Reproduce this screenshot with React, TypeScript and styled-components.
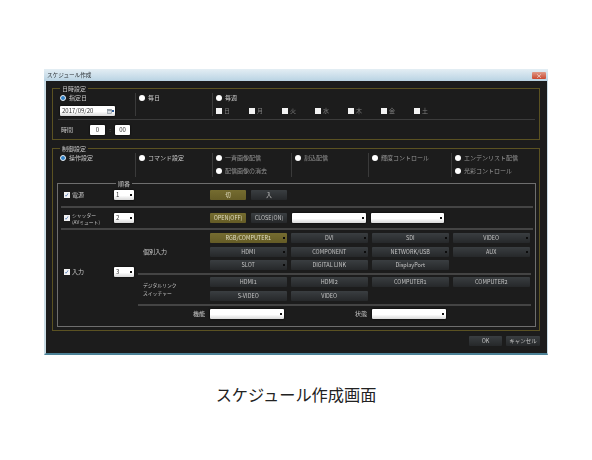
import React from "react";
import styled, { createGlobalStyle } from "styled-components";

const Global = createGlobalStyle`
  html, body { margin: 0; padding: 0; background: #fff; }
  body { font-family: "Noto Sans CJK JP", "Liberation Sans", sans-serif; }
`;

const Page = styled.div`
  width: 592px;
  height: 460px;
  overflow: hidden;
  padding-top: 69px;
  box-sizing: border-box;
`;
const Win = styled.div`
  width: 504px;
  height: 286px;
  margin-left: 44px;
  box-sizing: border-box;
  background: #1c1c1c;
  border-left: 2px solid #c9dbe4;
  border-right: 1px solid #c9dbe4;
  border-bottom: 2px solid #4b8196;
  filter: blur(0.45px);
  display: flex;
  flex-direction: column;
  font-size: 6px;
  line-height: 8px;
  color: #c8c8c8;
`;
const TitleBar = styled.div`
  height: 12px;
  margin: 0 -1px 0 -2px;
  padding: 0 2px 0 3px;
  flex: none;
  display: flex;
  align-items: center;
  justify-content: space-between;
  background: linear-gradient(#e4eef4, #b9d3e3);
  color: #2a2f33;
  font-size: 5.6px;
`;
const CloseBtn = styled.div`
  width: 14px;
  height: 7px;
  border-radius: 1px;
  background: linear-gradient(#e09a88, #c9482f);
  color: #fff;
  font-size: 6px;
  line-height: 7px;
  text-align: center;
`;
const Body = styled.div`
  flex: 1;
  padding: 7px 7px 0 6px;
  display: flex;
  flex-direction: column;
  gap: 8px;
`;
const Group = styled.section`
  position: relative;
  border: 1px solid #5b5222;
  box-sizing: border-box;
`;
const Legend = styled.div`
  position: absolute;
  left: 7px;
  top: -4px;
  padding: 0 2px;
  background: #1c1c1c;
`;
const Columns = styled.div<{ $cols: string; $height: number }>`
  display: grid;
  grid-template-columns: ${(p) => p.$cols};
  height: ${(p) => p.$height}px;
  margin-top: 4px;
`;
const Col = styled.div<{ $first?: boolean }>`
  display: flex;
  flex-direction: column;
  gap: 3px;
  padding-left: ${(p) => (p.$first ? 7 : 3)}px;
  border-left: ${(p) => (p.$first ? "none" : "1px solid #3a3a3a")};
`;
const Opt = styled.div<{ $dim?: boolean }>`
  height: 10px;
  display: flex;
  align-items: center;
  gap: 2px;
  white-space: nowrap;
  color: ${(p) => (p.$dim ? "#969696" : "#c8c8c8")};
`;
const Radio = styled.span<{ $on?: boolean }>`
  width: 6px;
  height: 6px;
  flex: none;
  border-radius: 50%;
  margin-right: 1px;
  box-sizing: border-box;
  background: ${(p) => (p.$on ? "#2f7fc4" : "#fff")};
  border: ${(p) => (p.$on ? "1.5px solid #e8eef2" : "none")};
`;
const Box = styled.span`
  width: 6px;
  height: 6px;
  flex: none;
  background: #f2f2f2;
  color: #2b5fa8;
  font-size: 6px;
  line-height: 6px;
  text-align: center;
  font-family: "DejaVu Sans", sans-serif;
`;
const Week = styled.div`
  display: grid;
  grid-template-columns: repeat(7, 33px);
`;
const DayCheck = styled.div`
  display: flex;
  align-items: center;
  gap: 2px;
  height: 10px;
  color: #808080;
`;
const Field = styled.div<{ $w: number }>`
  position: relative;
  width: ${(p) => p.$w}px;
  height: 10px;
  flex: none;
  box-sizing: border-box;
  padding: 0 2px;
  border-radius: 1px;
  background: linear-gradient(#fff 55%, #d8d8d8);
  box-shadow: 0 0 2px #000;
  color: #333;
  line-height: 10px;
  white-space: nowrap;
  &::after {
    content: "";
    position: absolute;
    right: 2px;
    top: 4px;
    width: 2px;
    height: 2px;
    background: #111;
  }
`;
const DateField = styled(Field)`
  display: flex;
  align-items: center;
  justify-content: space-between;
  padding-right: 3px;
  &::after { right: 1px; background: #2f5f9f; }
`;
const Sep = styled.div`
  height: 1px;
  margin: 3px 4px 0 5px;
  background: #3c3c3c;
`;
const TimeRow = styled.div`
  display: flex;
  align-items: center;
  height: 19px;
  padding-left: 8px;
`;
const TimeLabel = styled.span`
  width: 29px;
`;
const TimeInput = styled.div`
  width: 15px;
  height: 10px;
  background: #fff;
  color: #333;
  text-align: center;
  line-height: 10px;
  border-radius: 1px;
  box-shadow: 0 0 2px #000;
`;
const Colon = styled.span`
  width: 10px;
  text-align: center;
  color: #666;
`;
const Inner = styled.div`
  position: relative;
  margin: 6px 3px 3px 4px;
  border: 1px solid #6e6e6e;
  box-sizing: border-box;
  height: 144px;
`;
const InnerLegend = styled.div`
  position: absolute;
  left: 58px;
  top: -4px;
  padding: 0 2px;
  background: #1c1c1c;
`;
const Row = styled.div<{ $h: number }>`
  box-sizing: border-box;
  height: ${(p) => p.$h}px;
  margin: 0 2px 0 3px;
  padding-left: 3px;
  border-bottom: 2px solid #444;
  display: flex;
  align-items: center;
`;
const CheckCell = styled.div`
  width: 50px;
  flex: none;
  display: flex;
  align-items: center;
  gap: 2px;
  white-space: nowrap;
`;
const TwoLines = styled.span`
  display: block;
  font-size: 4.8px;
  line-height: 7.5px;
`;
const SelectCell = styled.div`
  width: 96px;
  flex: none;
`;
const Actions = styled.div`
  display: flex;
  gap: 5px;
`;
const Btn = styled.div<{ $on?: boolean; $caret?: boolean; $w?: number }>`
  position: relative;
  width: ${(p) => (p.$w ? `${p.$w}px` : "auto")};
  height: 10px;
  flex: none;
  line-height: 10px;
  text-align: center;
  font-size: 5.5px;
  white-space: nowrap;
  border-radius: 1px;
  background: ${(p) =>
    p.$on ? "linear-gradient(#756c30, #655c26)" : "linear-gradient(#3a3e41, #26282a)"};
  color: ${(p) => (p.$on ? "#e0dcc0" : "#c4c4c4")};
  &::after {
    content: "";
    display: ${(p) => (p.$caret ? "block" : "none")};
    position: absolute;
    right: 2px;
    top: 4px;
    width: 2px;
    height: 2px;
    background: #0c0c0c;
  }
`;
const InputArea = styled.div`
  display: flex;
  margin-left: 3px;
`;
const InputLeft = styled.div`
  width: 77px;
  height: 84px;
  padding-left: 3px;
  box-sizing: border-box;
  flex: none;
  display: flex;
  align-items: center;
`;
const InputRight = styled.div`
  width: 393px;
  display: flex;
  flex-direction: column;
`;
const Sec = styled.div<{ $top: number; $bottom: number; $line?: boolean }>`
  display: flex;
  align-items: center;
  padding: ${(p) => p.$top}px 0 ${(p) => p.$bottom}px;
  border-bottom: ${(p) => (p.$line ? "2px solid #444" : "none")};
`;
const SecLabel = styled.div`
  width: 72px;
  flex: none;
  padding-left: 5px;
  box-sizing: border-box;
  white-space: nowrap;
`;
const BtnGrid = styled.div`
  display: grid;
  grid-template-columns: repeat(4, 76.5px);
  column-gap: 4.5px;
  row-gap: 3.5px;
`;
const FieldLabel = styled.div<{ $w: number }>`
  width: ${(p) => p.$w}px;
  flex: none;
  box-sizing: border-box;
  padding-right: 5px;
  text-align: right;
`;
const Footer = styled.div`
  display: flex;
  justify-content: flex-end;
  gap: 4px;
  margin-top: -3px;
`;
const Caption = styled.div`
  margin-top: 29px;
  text-align: center;
  font-size: 16.2px;
  line-height: 20px;
  color: #222;
`;
const DAYS = ["日", "月", "火", "水", "木", "金", "土"];
const INPUTS: [string, boolean, boolean][] = [
  ["RGB/COMPUTER1", true, true],
  ["DVI", false, true],
  ["SDI", false, true],
  ["VIDEO", false, true],
  ["HDMI", false, true],
  ["COMPONENT", false, true],
  ["NETWORK/USB", false, true],
  ["AUX", false, true],
  ["SLOT", false, true],
  ["DIGITAL LINK", false, false],
  ["DisplayPort", false, false],
];
const LINKS = ["HDMI1", "HDMI2", "COMPUTER1", "COMPUTER2", "S-VIDEO", "VIDEO"];

const CalendarIcon = () => (
  <svg width="5" height="5" viewBox="0 0 5 5">
    <rect x="0.5" y="0.5" width="4" height="4" fill="#d8dde2" stroke="#7d8791" strokeWidth="0.6" />
    <rect x="0.5" y="0.5" width="4" height="1.2" fill="#7d8791" />
  </svg>
);

export default function App() {
  return (
    <Page>
      <Global />
      <Win>
        <TitleBar>
          <span>スケジュール作成</span>
          <CloseBtn>×</CloseBtn>
        </TitleBar>
        <Body>
          <Group>
            <Legend>日時設定</Legend>
            <Columns $cols="82px 77px 1fr" $height={23}>
              <Col $first>
                <Opt><Radio $on />指定日</Opt>
                <DateField $w={55}>
                  <span>2017/09/20</span>
                  <CalendarIcon />
                </DateField>
              </Col>
              <Col><Opt><Radio />毎日</Opt></Col>
              <Col>
                <Opt><Radio />毎週</Opt>
                <Week>
                  {DAYS.map((d) => (
                    <DayCheck key={d}><Box />{d}</DayCheck>
                  ))}
                </Week>
              </Col>
            </Columns>
            <Sep />
            <TimeRow>
              <TimeLabel>時間</TimeLabel>
              <TimeInput>0</TimeInput>
              <Colon>:</Colon>
              <TimeInput>00</TimeInput>
            </TimeRow>
          </Group>
          <Group>
            <Legend>制御設定</Legend>
            <Columns $cols="82px 77px 79px 77px 83px 1fr" $height={24}>
              <Col $first><Opt><Radio $on />操作設定</Opt></Col>
              <Col><Opt><Radio />コマンド設定</Opt></Col>
              <Col>
                <Opt $dim><Radio />一斉画像配信</Opt>
                <Opt $dim><Radio />配信画像の消去</Opt>
              </Col>
              <Col><Opt $dim><Radio />割込配信</Opt></Col>
              <Col><Opt $dim><Radio />輝度コントロール</Opt></Col>
              <Col>
                <Opt $dim><Radio />エンデンリスト配信</Opt>
                <Opt $dim><Radio />光彩コントロール</Opt>
              </Col>
            </Columns>
            <Inner>
              <InnerLegend>順番</InnerLegend>
              <Row $h={24}>
                <CheckCell><Box>✓</Box>電源</CheckCell>
                <SelectCell><Field $w={20}>1</Field></SelectCell>
                <Actions>
                  <Btn $on $w={36}>切</Btn>
                  <Btn $w={36}>入</Btn>
                </Actions>
              </Row>
              <Row $h={22}>
                <CheckCell>
                  <Box>✓</Box>
                  <div>
                    <TwoLines>シャッター</TwoLines>
                    <TwoLines>(AVミュート)</TwoLines>
                  </div>
                </CheckCell>
                <SelectCell><Field $w={20}>2</Field></SelectCell>
                <Actions>
                  <Btn $on $w={36}>OPEN(OFF)</Btn>
                  <Btn $w={36}>CLOSE(ON)</Btn>
                  <Field $w={74} />
                  <Field $w={73} />
                </Actions>
              </Row>
              <InputArea>
                <InputLeft>
                  <CheckCell><Box>✓</Box>入力</CheckCell>
                  <Field $w={20}>3</Field>
                </InputLeft>
                <InputRight>
                  <Sec $top={3} $bottom={3} $line>
                    <SecLabel>個別入力</SecLabel>
                    <BtnGrid>
                      {INPUTS.map(([t, on, caret]) => (
                        <Btn key={t} $on={on} $caret={caret}>{t}</Btn>
                      ))}
                    </BtnGrid>
                  </Sec>
                  <Sec $top={2} $bottom={3} $line>
                    <SecLabel>
                      <TwoLines>デジタルリンク</TwoLines>
                      <TwoLines>スイッチャー</TwoLines>
                    </SecLabel>
                    <BtnGrid>
                      {LINKS.map((t, i) => (
                        <Btn key={i}>{t}</Btn>
                      ))}
                    </BtnGrid>
                  </Sec>
                  <Sec $top={3} $bottom={0}>
                    <FieldLabel $w={72}>機能</FieldLabel>
                    <Field $w={74} />
                    <FieldLabel $w={88}>状態</FieldLabel>
                    <Field $w={74} />
                  </Sec>
                </InputRight>
              </InputArea>
            </Inner>
          </Group>
          <Footer>
            <Btn $w={33}>OK</Btn>
            <Btn $w={34}>キャンセル</Btn>
          </Footer>
        </Body>
      </Win>
      <Caption>スケジュール作成画面</Caption>
    </Page>
  );
}
